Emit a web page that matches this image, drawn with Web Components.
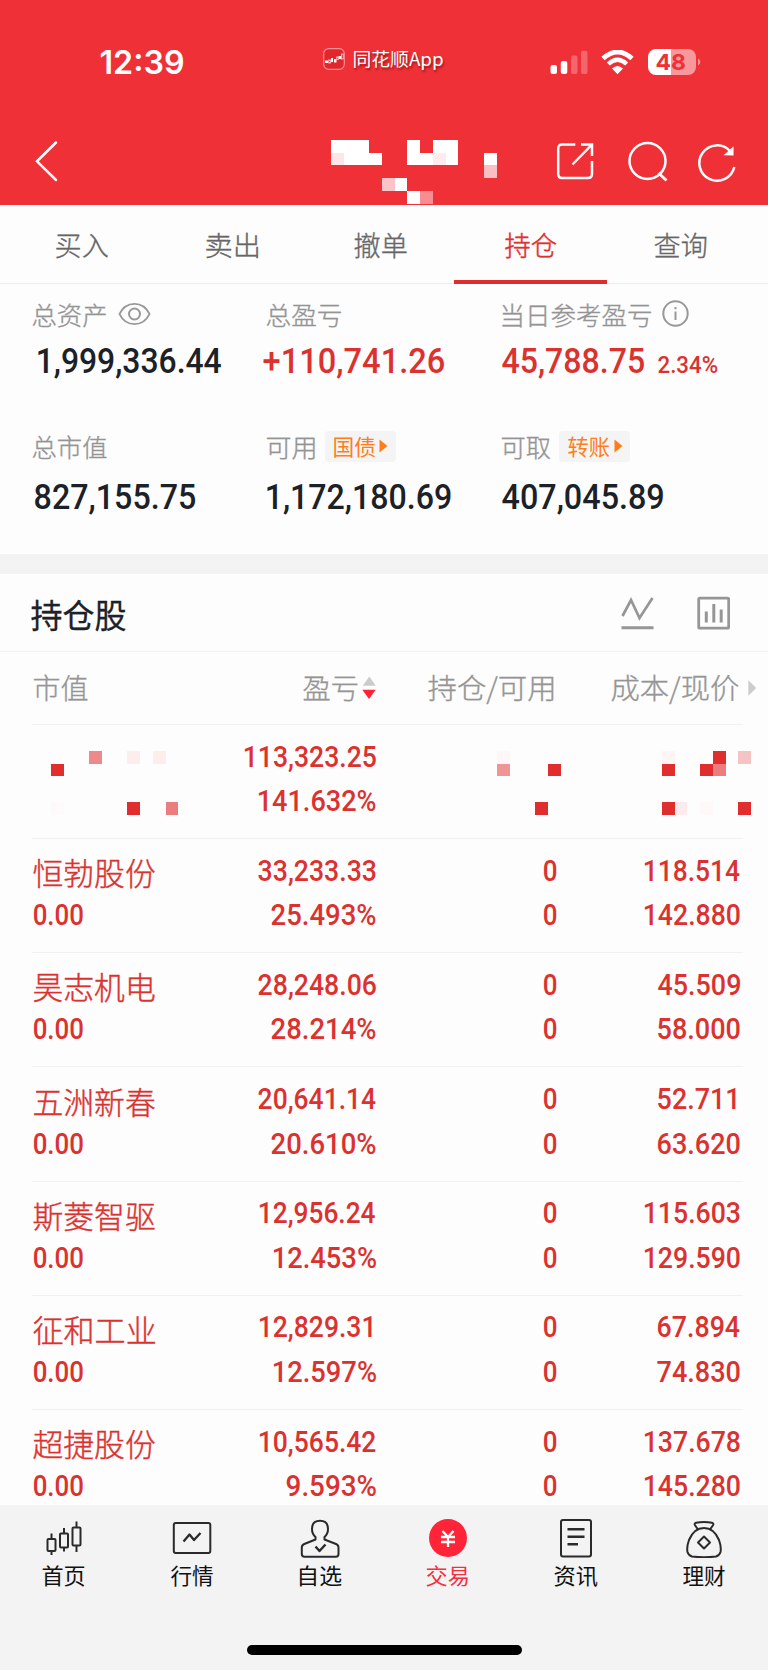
<!DOCTYPE html>
<html lang="zh-CN">
<head>
<meta charset="utf-8">
<title>持仓</title>
<style>
html,body{margin:0;padding:0}
body{width:768px;height:1670px;overflow:hidden;background:#fdfdfd;font-family:"Noto Sans CJK SC",sans-serif}
</style>
</head>
<body>
<trade-app></trade-app>
<script>
const NUM = 'Roboto,"Noto Sans CJK SC",sans-serif';
const ctx = document.createElement('canvas').getContext('2d');

/* Text whose drawn width is exactly the value of its "w" attribute. */
class FitText extends HTMLElement {
  connectedCallback() {
    if (this.shadowRoot) return;
    const w = +this.getAttribute('w');
    this.attachShadow({mode: 'open'}).innerHTML =
      `<style>:host{display:block;flex:none;width:${w}px;white-space:nowrap}span{display:inline-block;transform-origin:0 50%}</style><span><slot></slot></span>`;
    const cs = getComputedStyle(this);
    ctx.font = `${cs.fontWeight} ${cs.fontSize} ${cs.fontFamily}`;
    const m = ctx.measureText(this.textContent);
    const s = w / (m.actualBoundingBoxRight + m.actualBoundingBoxLeft);
    this.shadowRoot.querySelector('span').style.transform =
      `translateX(${m.actualBoundingBoxLeft * s - .5}px) scaleX(${s})`;
  }
}
customElements.define('fit-text', FitText);

/* Censored area: "x,y,colour,columns" in mosaic blocks, separated by ";". */
class PixelMosaic extends HTMLElement {
  connectedCallback() {
    if (this.shadowRoot) return;
    const u = 12.74;
    const r = this.getAttribute('cells').split(';').map(c => {
      const [x, y, f, n = 1] = c.split(',');
      return `<rect x="${x * u}" y="${y * u}" width="${u * n}" height="${u}" fill="${f}"/>`;
    }).join('');
    this.attachShadow({mode: 'open'}).innerHTML =
      `<style>:host{display:block}svg{display:block;overflow:visible}</style><svg width="1" height="1" shape-rendering="crispEdges">${r}</svg>`;
  }
}
customElements.define('pixel-mosaic', PixelMosaic);

function define(name, html) {
  const t = document.createElement('template');
  t.innerHTML = html;
  customElements.define(name, class extends HTMLElement {
    connectedCallback() {
      if (this.shadowRoot) return;
      this.attachShadow({mode: 'open'}).appendChild(t.content.cloneNode(true));
    }
  });
}

define('status-bar', `<style>
:host{display:flex;height:120px;align-items:flex-start;color:#fff;box-sizing:border-box;padding-left:100.5px}
.time{font:600 32px/40px Inter,sans-serif;margin-top:43px}
.logo{margin:48px 8.5px 0 140px}
.app{font:400 18px/24px "Noto Sans CJK SC",sans-serif;margin-top:46px;text-shadow:1px 2px 2px rgba(90,0,0,.55)}
svg{display:block;flex:none}
.sig{margin:50px 0 0 106.500px}.wifi{margin:49.5px 0 0 13px}
.bat{display:flex;align-items:center;margin-top:49px;margin-left:13.5px}
.cell{width:48px;height:26px;border-radius:8px;background:linear-gradient(90deg,#fff 23px,#f8989b 23px);color:#ef3036;font:700 22px/26px Inter,sans-serif;display:flex;justify-content:center}
</style>
<fit-text class="time" w="82.5">12:39</fit-text>
<svg class="logo" width="22" height="22" viewBox="0 0 22 22"><rect x=".7" y=".7" width="20.6" height="20.6" rx="5" fill="#e3262c" stroke="#f79296" stroke-width="1.2"/><g fill="#fff"><rect x="2" y="12.5" width="3" height="2.5"/><rect x="8" y="10" width="2" height="4"/><rect x="11" y="11" width="2.5" height="3.5"/><rect x="15.5" y="8" width="2.5" height="3"/></g><g fill="none" stroke="#ffd6d6" stroke-width=".8"><rect x="5.7" y="12" width="1.7" height="3"/><rect x="13.7" y="9" width="1.6" height="2.5"/><rect x="18.4" y="6" width="1.8" height="5"/></g></svg>
<fit-text class="app" w="90">同花顺App</fit-text>
<svg class="sig" width="38" height="25" viewBox="0 0 38 25" fill="#fff"><rect x=".5" y="15" width="6.5" height="9" rx="2"/><rect x="10.8" y="11" width="6.5" height="13" rx="2"/><g fill="#f4666b"><rect x="21" y="5.5" width="6.5" height="18.5" rx="2"/><rect x="31" y=".8" width="6.5" height="23.2" rx="2"/></g></svg>
<svg class="wifi" width="33" height="25" viewBox="0 0 33 25" fill="none" stroke="#fff"><path d="M2 8.5Q16.5-4.500 31 8.500" stroke-width="4.800"/><path d="M7.300 14Q16.500 5.500 25.700 14" stroke-width="4.400"/><path d="M11 18.600Q16.500 13.500 22 18.600L16.500 24.300z" fill="#fff" stroke="none"/></svg>
<div class="bat"><div class="cell"><fit-text w="29">48</fit-text></div><svg width="5" height="10"><path d="M2 1.500Q4.300 2.500 4.300 5T2 8.500z" fill="#f8989b"/></svg></div>`);

define('nav-bar', `<style>
:host{display:flex;height:85px;align-items:flex-start;padding-left:35px}
svg{display:block;flex:none;overflow:visible;fill:none;stroke:#fff;stroke-width:2.5}
pixel-mosaic{width:226px;margin:20px 0 0 274px}
</style>
<svg width="22" height="40" viewBox="0 0 22 40" style="margin-top:21px"><path d="M21 1.500L2 20.300 21 39" stroke-linecap="round"/></svg>
<pixel-mosaic cells="0,0,#fff,3;0,1,#fde5e8;1,1,#fff,3;6,0,#fff;8,0,#fff,2;6,1,#fff,2;8,1,#fdebed;9,1,#fff;12,1,#fff;12,2,#f9bfc2;4,3,#f9c3c7;5,3,#fff;6,4,#fff;7,4,#f78c91"></pixel-mosaic>
<svg width="37" height="37" viewBox="0 0 37 37" style="margin-top:23px"><path d="M18.300 1.500H5Q1.200 1.500 1.200 5.500V31Q1.200 35 5 35H31Q35 35 35 31V18"/><path d="M24 1.500H35V13M35 1.500L15.500 21.500"/></svg>
<svg width="40" height="40" viewBox="0 0 40 40" style="margin:22px 0 0 34px"><circle cx="19.500" cy="19" r="18"/><path d="M30.500 31L38.500 38.500" stroke-width="2.800"/></svg>
<svg width="38" height="39" viewBox="0 0 38 39" style="margin:22.500px 0 0 30px"><path d="M36.300 24A17.700 17.700 0 1 1 32 8"/><path d="M34.800 5V11.800L27.500 11.500z" fill="#fff" stroke-width="1.500"/></svg>`);

class TopTab extends HTMLElement {
  connectedCallback() {
    if (this.shadowRoot) return;
    this.attachShadow({mode: 'open'}).innerHTML = `<style>
:host{display:flex;flex:1;justify-content:center;position:relative;color:#676767;font:300 27px/40px "Noto Sans CJK SC",sans-serif;padding-top:19.500px;-webkit-text-stroke:.35px}
:host([active]){color:#de302f;-webkit-text-stroke:.5px}
:host([active])::after{content:"";position:absolute;left:-2.500px;right:-1.500px;bottom:-1px;height:4px;background:#dd2f30}
</style><fit-text w="52.3">${this.getAttribute('label')}</fit-text>`;
  }
}
customElements.define('top-tab', TopTab);

define('top-tabs', `<style>:host{display:flex;height:79px;box-sizing:border-box;padding:0 12.500px 0 7.500px;border-bottom:1px solid #ececec}</style>
<top-tab label="买入"></top-tab><top-tab label="卖出"></top-tab><top-tab label="撤单"></top-tab><top-tab label="持仓" active></top-tab><top-tab label="查询"></top-tab>`);

/* One figure of the account: the label line in slots, the value below. */
define('stat-item', `<style>
:host{display:block;color:#1b2127}
.label{display:flex;height:40px;align-items:center;color:#949494;font:300 25px/36px "Noto Sans CJK SC",sans-serif;-webkit-text-stroke:.35px}
.value{display:flex;align-items:baseline;font:500 35px/44px ${NUM}}
</style><div class="label"><slot name="label"></slot></div><div class="value"><slot></slot></div>`);

class LinkChip extends HTMLElement {
  connectedCallback() {
    if (this.shadowRoot) return;
    this.attachShadow({mode: 'open'}).innerHTML = `<style>
:host{display:flex;box-sizing:border-box;width:71px;height:31px;border-radius:4px;background:#f4f4f4;color:#ff7d1a;font:400 21.500px/30px "Noto Sans CJK SC",sans-serif;-webkit-text-stroke:0;align-items:center;padding-left:9px}
svg{margin-left:3.500px}</style><fit-text w="42">${this.getAttribute('label')}</fit-text><svg width="9" height="14"><path d="M.5 .5L8.500 7 .5 13.500z" fill="#ff7d1a"/></svg>`;
  }
}
customElements.define('link-chip', LinkChip);

define('account-summary', `<style>
:host{display:grid;grid-template-columns:1fr;height:270px;box-sizing:border-box;align-content:start}
.row{display:grid;grid-template-columns:234px 235px 1fr;padding-left:32.500px}
.assets{padding-top:9.500px}
.assets fit-text:not([slot]){margin-top:6px}
.cash{margin-top:39.500px}
.cash fit-text:not([slot]){margin-top:9.500px}
.red{color:#db3230}
svg{display:block;fill:none;stroke:#999;stroke-width:2;flex:none}
</style>
<div class="row assets">
<stat-item><fit-text slot="label" w="74">总资产</fit-text><svg slot="label" style="margin-left:11px" width="33" height="26" viewBox="0 0 33 26"><path d="M1.500 13C8-2 25-2 31.500 13C25 28 8 28 1.500 13z" transform="translate(0 1.300) scale(1 .9)"/><circle cx="16.500" cy="13" r="5.500"/></svg><fit-text w="184.300" style="margin-left:5px">1,999,336.44</fit-text></stat-item>
<stat-item><fit-text slot="label" w="75">总盈亏</fit-text><fit-text w="181" class="red" style="margin-left:-2.500px">+110,741.26</fit-text></stat-item>
<stat-item><fit-text slot="label" w="150">当日参考盈亏</fit-text><svg slot="label" style="margin-left:10px" width="27" height="27" viewBox="0 0 27 27"><circle cx="13.500" cy="13.500" r="12.200"/><path d="M13.500 11.500V20M13.500 7V9.300"/></svg><fit-text w="142.800" class="red">45,788.75</fit-text><fit-text w="59.700" class="red" style="font-size:24.500px;margin-left:14px">2.34%</fit-text></stat-item>
</div>
<div class="row cash">
<stat-item><fit-text slot="label" w="74">总市值</fit-text><fit-text w="161" style="margin-left:2px">827,155.75</fit-text></stat-item>
<stat-item><fit-text slot="label" w="48">可用</fit-text><link-chip slot="label" style="margin-left:10px" label="国债"></link-chip><fit-text w="184">1,172,180.69</fit-text></stat-item>
<stat-item><fit-text slot="label" w="48.500">可取</fit-text><link-chip slot="label" style="margin-left:9px" label="转账"></link-chip><fit-text w="161.500">407,045.89</fit-text></stat-item>
</div>`);

define('section-head', `<style>
:host{display:flex;height:78px;box-sizing:border-box;border-top:0;border-bottom:1.500px solid #f2f2f2;padding:0 38.500px 0 30.500px;align-items:flex-start;color:#1c2228;font:400 32.500px/48px "Noto Sans CJK SC",sans-serif;-webkit-text-stroke:.3px}
fit-text{margin-top:16px;margin-right:auto}
svg{display:block;fill:none;stroke:#969696}
</style><fit-text w="95.500">持仓股</fit-text>
<svg width="33" height="34" viewBox="0 0 33 34" style="margin-top:22px"><path d="M1.500 20L10 4 18.500 22 31.500 2" stroke-width="2.700"/><path d="M.500 31.800H32.500" stroke-width="3"/></svg>
<svg width="33" height="34" viewBox="0 0 33 34" style="margin:22px 0 0 43px"><rect x="1.700" y="2.200" width="30" height="30" rx="1" stroke-width="2.800"/><path d="M9.300 15.500V26.500M16.800 8V26.500M24.200 13.500V26.500" stroke-width="3"/></svg>`);

define('list-head', `<style>
:host{display:grid;grid-template-columns:150px 195px 177.500px 185px 1fr;height:72.500px;box-sizing:border-box;padding-left:32px;align-items:center;color:#959595;font:300 28.500px/40px "Noto Sans CJK SC",sans-serif;-webkit-text-stroke:.35px}
div{display:flex;justify-content:flex-end;align-items:center}
fit-text{margin-top:-1px}
svg{display:block;flex:none}
</style><fit-text w="54.500" style="margin-left:2px">市值</fit-text>
<div><fit-text w="55">盈亏</fit-text><svg style="margin-left:4px" width="15" height="24"><path d="M.800 9.700L7.300.500 13.800 9.700z" fill="#ccc"/><path d="M.300 13.700H13.800L7 23z" fill="#ff2336"/></svg></div>
<div><fit-text w="126.500">持仓/可用</fit-text></div><div><fit-text w="127.300">成本/现价</fit-text></div>
<svg style="margin-left:8.500px" width="9" height="16"><path d="M.300.300L8.300 8 .300 15.700z" fill="#ccc"/></svg>`);

/* Row of two lines and four columns; every cell is a slot. */
define('stock-row', `<style>
:host{display:grid;grid-template-columns:150px 194px 180.500px 184px;height:114.150px;box-sizing:border-box;margin:0 25.300px 0 32px;border-top:1.500px solid #f1f1f1;padding-top:9.700px;color:#db3230;font:500 30px/44.500px ${NUM}}
.c{display:flex;flex-direction:column;align-items:flex-end}
.c.l{align-items:flex-start;padding-left:1.500px}
</style><div class="c l"><slot name="name"></slot></div><div class="c"><slot name="pnl"></slot></div><div class="c"><slot name="qty"></slot></div><div class="c"><slot name="price"></slot></div>`);

class StockList extends HTMLElement {
  connectedCallback() {
    if (this.shadowRoot) return;
    const rows = [
      ['恒勃股份', '33,233.33', 117.5, '25.493%', 104, '118.514', 95.5, '142.880', 95.5],
      ['昊志机电', '28,248.06', 117.5, '28.214%', 104, '45.509', 83, '58.000', 82.5],
      ['五洲新春', '20,641.14', 117.5, '20.610%', 104, '52.711', 78.5, '63.620', 82.5],
      ['斯菱智驱', '12,956.24', 116, '12.453%', 102.5, '115.603', 95.5, '129.590', 95.5],
      ['征和工业', '12,829.31', 112.5, '12.597%', 102.5, '67.894', 82.5, '74.830', 82.5],
      ['超捷股份', '10,565.42', 116, '9.593%', 89.5, '137.678', 95.5, '145.280', 95.5],
    ];
    const f = (slot, text, w) => `<fit-text slot="${slot}" w="${w}"${text.endsWith('1') ? ' class="one"' : ''}>${text}</fit-text>`;
    this.attachShadow({mode: 'open'}).innerHTML = `<style>
:host{display:block;height:780.500px;overflow:hidden}
.n{font:300 30.500px/44.500px "Noto Sans CJK SC",sans-serif;position:relative;top:1.500px;-webkit-text-stroke:.4px}
.one{margin-right:3.800px}
pixel-mosaic{width:0;margin-top:16.300px}
</style>
<stock-row><pixel-mosaic slot="name" style="margin-left:17px" cells="0,1,#e02d2e;3,0,#ec8a8b;6,0,#fdeeee;8,0,#fdeeee;0,4,#fffafa;6,4,#e02d2e;9,4,#ec7d7e"></pixel-mosaic>
${f('pnl', '113,323.25', 131.5)}${f('pnl', '141.632%', 117)}
<pixel-mosaic slot="qty" style="align-self:flex-start;margin-left:120.800px" cells="0,0,#fff7f7;0,1,#f09595;4,1,#e02d2e;3,4,#e02d2e"></pixel-mosaic>
<pixel-mosaic slot="price" style="align-self:flex-start;margin-left:105.500px" cells="0,0,#fff5f5;0,1,#e02d2e;3,1,#e02d2e;4,0,#e02d2e;4,1,#ec7d7e;6,0,#f6c3c5;0,4,#e02d2e;1,4,#fdeaec;3,4,#fff8f8;6,4,#e02d2e"></pixel-mosaic></stock-row>` +
      rows.map(r => `<stock-row><fit-text slot="name" class="n" w="121.700">${r[0]}</fit-text>${f('name', '0.00', 49.5)}` +
        f('pnl', r[1], r[2]) + f('pnl', r[3], r[4]) + f('qty', '0', 13) + f('qty', '0', 13) +
        f('price', r[5], r[6]) + f('price', r[7], r[8]) + '</stock-row>').join('');
  }
}
customElements.define('stock-list', StockList);

define('tab-item', `<style>
:host{display:flex;flex:1;flex-direction:column;align-items:center;color:#111;font:400 21.500px/30px "Noto Sans CJK SC",sans-serif}
:host([active]){color:#f82d41}
.icon{height:40px;margin:13.500px 0 1.500px}
</style><div class="icon"><slot name="icon"></slot></div><slot></slot>`);

define('bottom-bar', `<style>
:host{display:flex;flex-direction:column;align-items:center;height:166px;background:#f3f3f3}
nav{display:flex;width:768px;height:140.500px}
svg{display:block;fill:none;stroke:#2a2a2a;stroke-width:2;stroke-linejoin:round}
.home{width:275px;height:10px;border-radius:5px;background:#000}
</style><nav>
<tab-item><svg slot="icon" width="40" height="40" viewBox="0 0 40 40"><rect x="3.500" y="21" width="8" height="12" rx="1"/><path d="M7.500 15.500V21M7.500 33V37"/><rect x="16" y="15.500" width="8" height="14" rx="1"/><path d="M20 10V15.500M20 29.500V33.500"/><rect x="28.500" y="9.500" width="8" height="18" rx="1"/><path d="M32.500 3.500V9.500M32.500 27.500V34"/></svg><fit-text w="42.700">首页</fit-text></tab-item>
<tab-item><svg slot="icon" width="40" height="40" viewBox="0 0 40 40"><rect x="1.800" y="5" width="36.500" height="30" rx="2"/><path d="M11.500 23.500L17.500 16.500 22 22 28.500 15" stroke-width="2.300"/></svg><fit-text w="42.700">行情</fit-text></tab-item>
<tab-item><svg slot="icon" width="40" height="40" viewBox="0 0 40 40"><path d="M15.500 21.500V19Q12 16 12 11Q12 2.800 20 2.800T28 11Q28 16 24.500 19V21.500L36 26Q38.500 27 38.500 29.500V36Q38.500 38.700 36 38.700H4.500Q1.800 38.700 1.800 36V29.500Q1.800 27 4.300 26z"/><path d="M15.500 28.500L19.500 33 25.500 26.500" stroke-width="2.400"/></svg><fit-text w="42" style="margin-left:2px">自选</fit-text></tab-item>
<tab-item active><svg slot="icon" width="40" height="40" viewBox="0 0 40 40"><circle cx="20" cy="20" r="19" fill="#ff2438" stroke="none"/><path d="M14.500 13L20 19 25.500 13M20 19V29M13 19H27M13 24H27" stroke="#fff" stroke-width="2.300"/></svg><fit-text w="42">交易</fit-text></tab-item>
<tab-item><svg slot="icon" width="40" height="40" viewBox="0 0 40 40"><rect x="5" y="2" width="30" height="36.500" rx="2"/><path d="M11.500 11.300H28.500M11.500 18.800H28.500M11.500 26.300H22" stroke-width="2.400"/></svg><fit-text w="43">资讯</fit-text></tab-item>
<tab-item><svg slot="icon" width="40" height="40" viewBox="0 0 40 40"><path d="M14 11.500L11 7.200Q10 5.500 12 4.800Q20 3 28 4.800Q30 5.500 29 7.200L26 11.500"/><path d="M20 10Q30 10 35 22Q37.500 29 36.500 34Q35.500 37.500 32 38.500Q20 40 8 38.500Q4.500 37.500 3.500 34Q2.500 29 5 22Q10 10 20 10z"/><path d="M20 18.500L26 24.500 20 30.500 14 24.500z"/></svg><fit-text w="42.700">理财</fit-text></tab-item>
</nav><div class="home"></div>`);

define('trade-app', `<style>
:host{display:flex;flex-direction:column;width:768px;height:1670px;background:#fdfdfd;overflow:hidden}
header{background:#ef3036;height:205px}
.gap{height:19.500px;background:#f3f3f3}
*{flex:none}
</style>
<header><status-bar></status-bar><nav-bar></nav-bar></header>
<top-tabs></top-tabs><account-summary></account-summary><div class="gap"></div>
<section-head></section-head><list-head></list-head><stock-list></stock-list><bottom-bar></bottom-bar>`);
</script>
</body>
</html>
